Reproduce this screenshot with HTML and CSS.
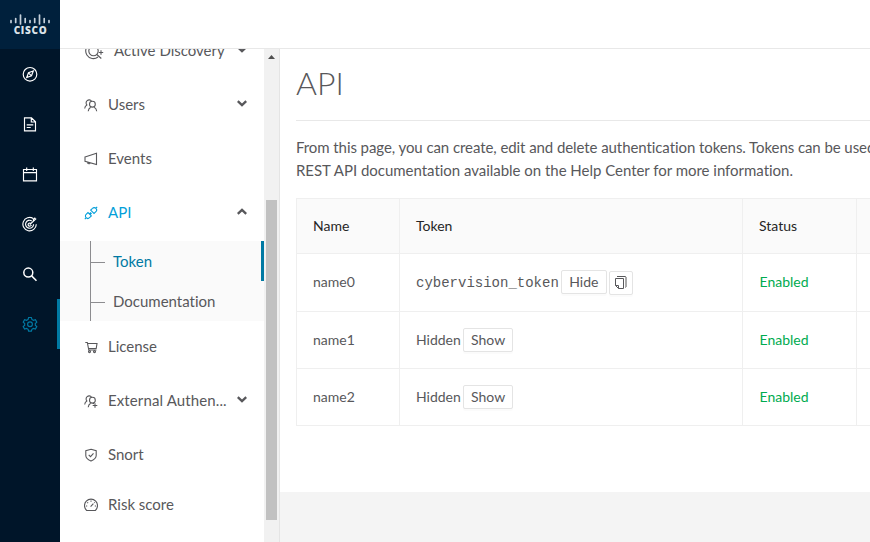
FILE: index.html
```html
<!DOCTYPE html>
<html lang="en">
<head>
<meta charset="utf-8">
<title>API</title>
<link rel="stylesheet" href="styles.css">
</head>
<body>
<div class="app">
  <nav class="rail">
    <div class="logo">
      <svg class="logo-bars" width="42" height="12" viewBox="0 0 42 12"><path d="M2 6.500v2M6.700 4.500v4M11.500 1v9M16.200 4.500v4M21 6.500v2M25.700 4.500v4M30.500 1v9M35.200 4.500v4M40 6.500v2"/></svg>
      <span class="logo-name">CISCO</span>
    </div>
    <a class="rail-item"><svg class="icon" width="16" height="16" viewBox="0 0 16 16"><circle cx="8" cy="8" r="6.800"/><path d="M11.300 4.700 9.500 9.500 4.700 11.300 6.500 6.500zM6.500 6.500l3 3"/></svg></a>
    <a class="rail-item"><svg class="icon" width="16" height="16" viewBox="0 0 16 16"><path d="M2.500 1.500h7l4 4v9h-11zM9.300 1.500v4.200h4.200M4.700 8.500h6.600M4.700 11.200h4"/></svg></a>
    <a class="rail-item"><svg class="icon" width="16" height="16" viewBox="0 0 16 16"><path d="M1.500 3.200h13v11.300h-13zM1.500 6.300h13M4.700 1.300v3.500M11.300 1.300v3.500"/></svg></a>
    <a class="rail-item"><svg class="icon" width="16" height="16" viewBox="0 0 16 16"><path d="M11.200 2.200A6.700 6.700 0 1 0 14.300 8M9.800 4.600A4 4 0 1 0 11.600 8M8.300 6.800A1.600 1.600 0 1 0 9.300 8.500M7.800 8.200 14.200 2.300M11.400 4.800V3L13.300 1.400"/></svg></a>
    <a class="rail-item"><svg class="icon search" width="16" height="16" viewBox="0 0 16 16"><circle cx="6.300" cy="6.300" r="4.500"/><path d="M9.600 9.600 14.500 14.500"/></svg></a>
    <a class="rail-item rail-active"><svg class="icon" width="16" height="16" viewBox="0 0 16 16"><path d="M6.600 1.200h2.800l.5 1.900 1.500.9 2-.6 1.400 2.400-1.500 1.400v1.700l1.500 1.400-1.400 2.400-2-.6-1.500.9-.5 1.900H6.600l-.5-1.900-1.500-.9-2 .6-1.400-2.400 1.500-1.400V7.200L1.200 5.800l1.400-2.400 2 .6 1.500-.9z"/><circle cx="8" cy="8" r="2.400"/></svg></a>
  </nav>

  <div class="page">
    <header class="topbar"></header>
    <div class="body">
      <aside class="sidebar">
        <ul class="menu">
          <li class="item">
            <svg class="icon" width="20" height="18" viewBox="0 0 20 18"><path d="M14 15A7.600 7.600 0 1 1 16.500 6.500"/><circle cx="9.500" cy="9" r="4.700"/><path d="M12.800 12.500l4.500 4M17 8.300v4.400M14.800 10.500h4.400"/></svg>
            <span class="label">Active Discovery</span>
            <svg class="arrow" width="10" height="7" viewBox="0 0 10 7"><path d="M.8 1.200 5 5.200 9.200 1.200"/></svg>
          </li>
          <li class="item">
            <svg class="icon" width="14" height="14" viewBox="0 0 14 14"><circle cx="8.400" cy="6.200" r="2.900"/><path d="M4.200 13.300c.2-2 1.300-3.400 2.500-4M12.700 13.300c-.2-2-1.300-3.400-2.600-4M.7 10.500c.1-1.700.9-2.900 2.100-3.600A3 3 0 1 1 7.500 3"/></svg>
            <span class="label">Users</span>
            <svg class="arrow" width="10" height="7" viewBox="0 0 10 7"><path d="M.8 1.200 5 5.200 9.200 1.200"/></svg>
          </li>
          <li class="item">
            <svg class="icon" width="14" height="14" viewBox="0 0 14 14"><path d="M1 5 12.500 1.300v11.200L1 9.300zM3.300 9.900c0 2 2.800 2.400 3 .9"/></svg>
            <span class="label">Events</span>
          </li>
          <li class="item item-open">
            <svg class="icon" width="14" height="14" viewBox="0 0 14 14"><path d="M6.600 4.100 8.500 2.300c1-1 2.500-.9 3.400 0s.9 2.400 0 3.300L10 7.500zM11.900 2.200 13.200.900M7.400 9.900l-1.900 1.800c-1 1-2.500.9-3.400 0s-.9-2.400 0-3.300L4 6.500zM2.100 11.800.8 13.100M5.400 8l1.500-1.500M6.100 8.600l1.500-1.500"/></svg>
            <span class="label">API</span>
            <svg class="arrow" width="10" height="7" viewBox="0 0 10 7"><path d="M.8 5.800 5 1.800 9.200 5.800"/></svg>
          </li>
        </ul>
        <ul class="submenu">
          <li class="sub sub-active">Token</li>
          <li class="sub">Documentation</li>
        </ul>
        <ul class="menu-rest">
          <li class="item">
            <svg class="icon" width="14" height="14" viewBox="0 0 14 14"><path d="M1.300 2.500h2l1.500 7.500h7.700M3.500 3.500h9.500l-.8 5H4.500"/><circle cx="5.500" cy="11.600" r="1"/><circle cx="10.500" cy="11.600" r="1"/></svg>
            <span class="label">License</span>
          </li>
          <li class="item">
            <svg class="icon" width="14" height="14" viewBox="0 0 14 14"><circle cx="8.400" cy="6.200" r="2.900"/><path d="M4.200 13.300c.2-2 1.300-3.400 2.500-4M8.800 9.300l1.200.3M8.700 11.500h4.600M11 9.200v4.600M.7 10.500c.1-1.700.9-2.900 2.100-3.600A3 3 0 1 1 7.500 3"/></svg>
            <span class="label wide">External Authen...</span>
            <svg class="arrow" width="10" height="7" viewBox="0 0 10 7"><path d="M.8 1.200 5 5.200 9.200 1.200"/></svg>
          </li>
          <li class="item item-tight">
            <svg class="icon" width="14" height="14" viewBox="0 0 14 14"><path d="M7 1.200 12.200 2.600v5c0 2.500-2.600 4.400-5.200 5.500-2.600-1.100-5.200-3-5.200-5.500v-5zM4.700 6.800 6.500 8.600 9.500 5.400"/></svg>
            <span class="label">Snort</span>
          </li>
          <li class="item">
            <svg class="icon" width="14" height="14" viewBox="0 0 14 14"><path d="M2.700 12.500A6.500 6.500 0 1 1 11.300 12.500zM6.600 8.700 9.400 5.700M7 2.500v1.200M3.300 4.300l.8.800M10.700 4.300l-.5.500M2 8h1.200M10.800 8H12"/></svg>
            <span class="label">Risk score</span>
          </li>
        </ul>
      </aside>
      <div class="scrollbar">
        <svg width="7" height="4" viewBox="0 0 7 4"><path d="M0 4 3.500 0 7 4z"/></svg>
        <div class="thumb"></div>
      </div>

      <main class="content">
        <section class="panel">
          <h1>API</h1>
          <p class="intro"><span class="lead">From this page, you can create, edit and delete authentication tokens. Tokens can be used</span><br>REST API documentation available on the Help Center for more information.</p>
          <div class="table">
            <div class="row head"><div>Name</div><div>Token</div><div>Status</div><div></div></div>
            <div class="row first">
              <div>name0</div>
              <div><code>cybervision_token</code><button class="btn hide">Hide</button><button class="btn copy" aria-label="Copy"><svg width="14" height="16" viewBox="0 0 14 16"><path class="back" d="M3 1.500h8.500v11"/><path class="side" d="M11 2h2v10h-2z"/><path d="M1.500 3.500h8v10h-5l-3-3zM1.500 10.500h3v3"/></svg></button></div>
              <div class="enabled">Enabled</div><div></div>
            </div>
            <div class="row"><div>name1</div><div>Hidden<button class="btn">Show</button></div><div class="enabled">Enabled</div><div></div></div>
            <div class="row"><div>name2</div><div>Hidden<button class="btn">Show</button></div><div class="enabled">Enabled</div><div></div></div>
          </div>
        </section>
      </main>
    </div>
  </div>
</div>
</body>
</html>
```
FILE: styles.css
```css
* { box-sizing: border-box; }
body { margin: 0; font-family: Lato, "Liberation Sans", sans-serif; font-size: 15px; font-variant-ligatures: none; color: #58585b; background: #fff; }
ul { list-style: none; margin: 0; padding: 0; }
svg { display: block; flex: none; }
.app { display: flex; width: 870px; height: 542px; overflow: hidden; }

.rail { width: 60px; flex: none; background: #001529; }
.logo { height: 49px; background: #00203c; display: flex; flex-direction: column; align-items: center; padding-top: 14px; }
.logo-bars { fill: none; stroke: #c5d0da; stroke-width: 1.700; stroke-linecap: round; }
.logo-name { font-family: "Open Sans", sans-serif; font-size: 10px; line-height: 10px; font-weight: 800; letter-spacing: .7px; color: #dbe2e8; margin: -1px -1px 0 0; }
.rail-item { height: 50px; display: flex; align-items: center; padding: 0 0 0 21.500px; color: #fff; border-right: 3px solid transparent; }
.rail-item svg { transform: translateY(.3px); }
.rail-active { color: #0079a3; border-color: #0079a3; }
.icon { fill: none; stroke: currentColor; stroke-width: 1.150; }
.search { stroke-width: 1.500; }

.page { flex: 1; min-width: 0; display: flex; flex-direction: column; }
.topbar { height: 49px; flex: none; border-bottom: 1px solid #e8e8e8; }
.body { flex: 1; min-height: 0; display: flex; }
.sidebar { width: 204px; flex: none; overflow: hidden; }
.menu { margin-top: -24px; }
.item { height: 50px; margin-bottom: 4px; padding: 0 17px 0 24px; display: flex; align-items: center; }
.item .icon { stroke-width: 1.100; margin-top: 1px; }
.label { margin-left: 10px; flex: 1; white-space: nowrap; line-height: 22px; }
.wide { letter-spacing: .12px; }
.item .arrow { fill: none; stroke: #58585b; stroke-width: 2.300; margin-top: -2px; }
.item-open { color: #049fd9; }
.item-tight { margin-bottom: 0; }
.submenu { background: linear-gradient(#8c8c8f, #8c8c8f) 30px 0 / 1px 100% no-repeat #fafafa; }
.sub { height: 40px; display: flex; align-items: center; padding-left: 30px; border-right: 3px solid transparent; }
.sub::before { content: ""; width: 15px; height: 1px; margin: 2px 8px 0 0; background: #8c8c8f; }
.sub-active { color: #0079a3; border-color: #0079a3; }
.scrollbar { width: 16px; flex: none; background: #f1f1f1; border-right: 1px solid #e4e4e4; padding: 6px 2px 0; }
.scrollbar svg { margin-left: 2px; fill: #505050; }
.thumb { width: 11px; height: 320px; margin-top: 141px; background: #c1c1c1; }

.content { flex: 1; min-width: 0; background: #f4f4f4; overflow: hidden; }
.panel { height: 443px; background: #fff; padding: 0 0 0 16px; overflow: hidden; }
h1 { margin: 0 0 15px; height: 72px; border-bottom: 1px solid #e8e8e8; font-size: 32px; font-weight: 300; line-height: 68px; }
.intro { margin: 0 0 16px; line-height: 23px; white-space: nowrap; letter-spacing: -.025px; }
.lead { letter-spacing: -.077px; }
.table { width: 640px; border: 1px solid #efefef; border-bottom: 0; font-size: 14px; }
.row { display: grid; grid-template-columns: 103px 343px 114px 1fr; height: 57px; }
.row > div { border-right: 1px solid #efefef; border-bottom: 1px solid #efefef; padding: 0 0 2px 16px; display: flex; align-items: center; }
.head { height: 55px; background: #fafafa; color: #262626; }
.first { height: 58px; }
.row > .enabled { color: #00ab50; padding-left: 16.500px; }
code { font-family: "Liberation Mono", monospace; font-size: 14px; margin-top: 2px; }
.btn { height: 24px; margin: 1px 0 0 2px; padding: 0 7.200px; border: 1px solid #e4e4e4; border-radius: 2px; background: #fff; box-shadow: 0 2px 0 rgba(0,0,0,.016); font: inherit; color: inherit; line-height: 22px; }
.hide { width: 46px; }
.copy { width: 24px; padding: 0; display: flex; align-items: center; justify-content: center; margin-top: 3px; }
.copy path { fill: none; stroke: #58585b; }
.copy .side { fill: #aaa; stroke: none; }
```
